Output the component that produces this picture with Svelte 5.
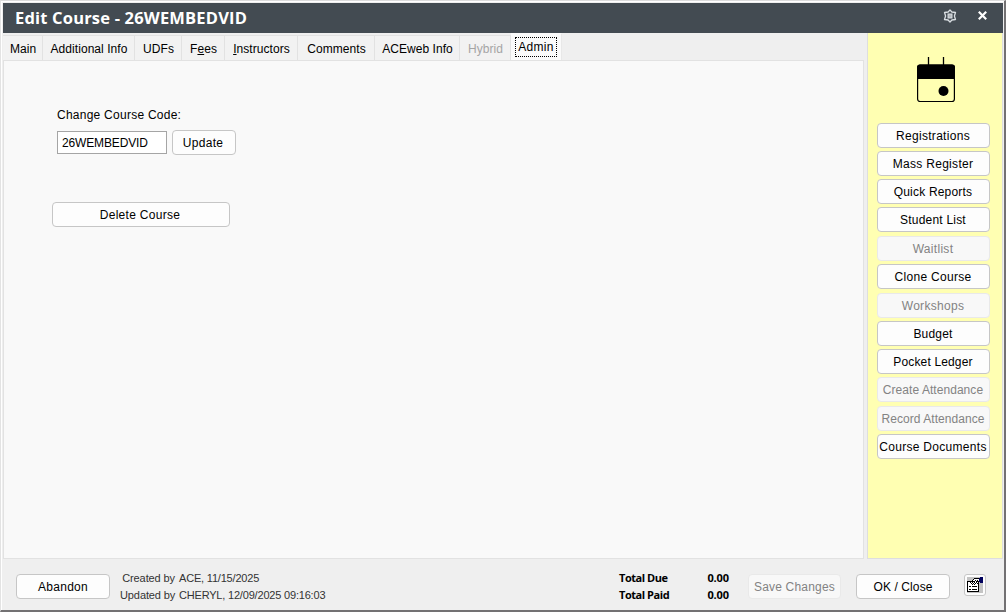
<script lang="ts">
	interface Tab {
		label: string;
		width: number;
		key?: number;
		disabled?: boolean;
	}

	interface Action {
		label: string;
		gap: number;
		spacing: number;
		disabled?: boolean;
	}

	const tabs: Tab[] = [
		{ label: 'Main', width: 40 },
		{ label: 'Additional Info', width: 92 },
		{ label: 'UDFs', width: 47 },
		{ label: 'Fees', width: 43, key: 1 },
		{ label: 'Instructors', width: 73, key: 0 },
		{ label: 'Comments', width: 77 },
		{ label: 'ACEweb Info', width: 85 },
		{ label: 'Hybrid', width: 51, disabled: true },
		{ label: 'Admin', width: 51 }
	];

	const actions: Action[] = [
		{ label: 'Registrations', gap: 0, spacing: 0.3 },
		{ label: 'Mass Register', gap: 3, spacing: 0.3 },
		{ label: 'Quick Reports', gap: 3, spacing: 0.2 },
		{ label: 'Student List', gap: 3, spacing: 0.2 },
		{ label: 'Waitlist', gap: 4, spacing: 0.3, disabled: true },
		{ label: 'Clone Course', gap: 3, spacing: 0.3 },
		{ label: 'Workshops', gap: 4, spacing: 0.3, disabled: true },
		{ label: 'Budget', gap: 3, spacing: 0.2 },
		{ label: 'Pocket Ledger', gap: 3, spacing: 0.15 },
		{ label: 'Create Attendance', gap: 3, spacing: 0.05, disabled: true },
		{ label: 'Record Attendance', gap: 4, spacing: 0.05, disabled: true },
		{ label: 'Course Documents', gap: 3, spacing: 0.3 }
	];

	let active = $state('Admin');
	let code = $state('26WEMBEDVID');
</script>

<div class="window">
	<header class="titlebar">
		<h1>Edit Course - {code}</h1>
		<svg class="gear" width="14" height="14" viewBox="0 0 14 14" fill="none" stroke="#d9dee2">
			<path d="M7 1 8.900 3 12.500 3.500 11.400 7 12.500 10.500 8.900 11 7 13 5.100 11 1.500 10.500 2.600 7 1.500 3.500 5.100 3Z" stroke-width="1.300" stroke-linejoin="round" />
			<rect x="5" y="5" width="4" height="4" fill="#b5babe" stroke-width="1" />
		</svg>
		<svg class="close" width="9" height="9" viewBox="0 0 9 9" stroke="#fff" stroke-width="2.2">
			<path d="M.8.8l7.400 7.400M8.200.8L.8 8.200" />
		</svg>
	</header>

	<div class="middle">
		<main>
			<nav class="tabs">
				{#each tabs as tab}
					<button
						class="tab"
						class:active={active === tab.label}
						disabled={tab.disabled}
						style:width="{tab.width}px"
						onclick={() => { active = tab.label; }}
					>
						<span>{#if tab.key !== undefined}{tab.label.slice(0, tab.key)}<u>{tab.label[tab.key]}</u>{tab.label.slice(tab.key + 1)}{:else}{tab.label}{/if}</span>
					</button>
				{/each}
			</nav>
			<section class="panel">
				<label for="code">Change Course Code:</label>
				<div class="code-row">
					<input id="code" value={code} />
					<button class="btn update">Update</button>
				</div>
				<button class="btn delete">Delete Course</button>
			</section>
		</main>

		<aside>
			<svg class="calendar" width="38" height="46" viewBox="0 0 38 46">
				<path d="M11.500 0v9M26.500 0v9" stroke="#000" stroke-width="1.300" />
				<rect x=".6" y="8" width="36.800" height="36.500" rx="2.500" fill="none" stroke="#000" stroke-width="1.200" />
				<path d="M0 22V10.500Q0 7.500 3 7.500H35Q38 7.500 38 10.500V22Z" />
				<circle cx="26.500" cy="34" r="5" />
			</svg>
			{#each actions as action}
				<button
					class="btn action"
					disabled={action.disabled}
					style:margin-top="{action.gap}px"
					style:letter-spacing="{action.spacing}px"
				>{action.label}</button>
			{/each}
		</aside>
	</div>

	<footer>
		<button class="btn abandon">Abandon</button>
		<dl class="audit">
			<dt>Created by</dt><dd>ACE, 11/15/2025</dd>
			<dt>Updated by</dt><dd>CHERYL, 12/09/2025 09:16:03</dd>
		</dl>
		<dl class="totals">
			<dt>Total Due</dt><dd>0.00</dd>
			<dt>Total Paid</dt><dd>0.00</dd>
		</dl>
		<button class="btn save" disabled>Save Changes</button>
		<button class="btn ok">OK / Close</button>
		<button class="btn props" aria-label="Properties">
			<svg width="16" height="16" viewBox="0 0 16 16" shape-rendering="crispEdges">
				<rect width="16" height="16" fill="#c4c4c4" />
				<path d="M0 4h12v11H0z" />
				<path d="M1 5h10v9H1z" fill="#fff" />
				<path d="M2 9h2v1H2zM5 9h5v1H5zM2 12h2v1H2zM5 12h5v1H5z" />
				<path d="M3 5h1v1H3zM4 4h1v1H4zM5 3h1v1H5zM6 2h1v1H6zM7 1h5v1H7zM5 5h1v1H5zM7 5h1v1H7zM6 6h1v1H6zM8 6h1v1H8zM4 6h1v1H4zM5 7h1v1H5zM7 7h1v1H7zM9 5h1v1H9zM10 6h2v1h-2z" />
				<path d="M7 2h5v2H7zM6 3h1v1H6zM8 4h1v1H8z" fill="#fff" />
				<path d="M8 3h1v1H8zM10 3h1v1h-1zM9 4h1v1H9z" />
				<path d="M12 1h1V0h3v6h-3V5h-1z" fill="#00005c" />
			</svg>
		</button>
	</footer>
</div>

<style>
	:global(body) {
		margin: 0;
		overflow: hidden;
	}

	.window {
		box-sizing: border-box;
		width: 1006px;
		height: 612px;
		display: flex;
		flex-direction: column;
		padding: 1px 1px 0;
		background: #efefef;
		border: solid;
		border-width: 1px 2px 2px 1px;
		border-color: #dcdcdc #737173 #737173 #e3e3e3;
		box-shadow: inset 1px 1px #fff;
		font-family: "Liberation Sans", Arial, sans-serif;
		font-size: 12px;
		color: #000;
	}

	button, input {
		box-sizing: border-box;
		font: inherit;
		color: inherit;
		padding: 0;
		margin: 0;
	}

	.titlebar {
		display: flex;
		align-items: center;
		height: 30px;
		margin: 1px 0 0 1px;
		padding-right: 16px;
		background: #434b52;
		color: #fff;
	}
	h1 {
		flex: 1;
		margin: 0 0 0 12px;
		font: bold 16.5px/30px "Open Sans", "Noto Sans", sans-serif;
		letter-spacing: 0.18px;
	}
	.gear { margin: -5px 21px 0 0; }
	.close { margin-top: -5px; }

	.middle {
		display: flex;
		height: 526px;
		padding-left: 1px;
	}
	main {
		width: 861px;
		display: flex;
		flex-direction: column;
		margin-right: 3px;
	}

	.tabs {
		display: flex;
		height: 28px;
		padding-top: 2px;
		box-sizing: border-box;
	}
	.tab {
		height: 26px;
		padding: 1px 0 0 1px;
		border: solid #e2e2e2;
		border-width: 1px 1px 1px 0;
		background: #f2f2f2;
		letter-spacing: 0.06px;
		white-space: nowrap;
	}
	.tab:disabled { color: #a5a5a5; }
	.tab.active {
		height: 28px;
		margin-top: -2px;
		padding: 0;
		background: #fafafa;
		border-color: #fafafa #e8e8e8 #fafafa #fafafa;
	}
	.tab.active span {
		display: inline-block;
		height: 18px;
		line-height: 18px;
		padding: 0 2px;
		letter-spacing: 0.3px;
		border: 1px dotted #000;
	}
	u { text-underline-offset: 1px; }

	.panel {
		box-sizing: border-box;
		flex: 1;
		display: flex;
		flex-direction: column;
		align-items: flex-start;
		margin-top: -1px;
		padding: 47px 0 0 48px;
		background: #f9f9f9;
		border: 1px solid #e2e2e2;
	}
	label {
		margin-left: 5px;
		line-height: 14px;
		letter-spacing: 0.25px;
	}
	.code-row {
		display: flex;
		margin: 8px 0 0 5px;
		align-items: center;
	}
	input {
		width: 110px;
		height: 23px;
		padding: 0 4px;
		border: 1px solid #a5a5a5;
		border-radius: 0;
		background: #fff;
		letter-spacing: -0.15px;
	}

	.btn {
		height: 25px;
		flex-shrink: 0;
		display: flex;
		align-items: center;
		justify-content: center;
		padding-right: 2px;
		border: 1px solid #c6c6c6;
		border-radius: 4px;
		background: #fdfdfd;
		letter-spacing: 0.3px;
		white-space: nowrap;
	}
	.btn:disabled {
		color: #838383;
		background: #f8f8f8;
		border-color: #e9e9e9;
	}
	.update { width: 64px; margin-left: 5px; }
	.delete { width: 178px; margin-top: 47px; }

	aside {
		box-sizing: border-box;
		width: 136px;
		display: flex;
		flex-direction: column;
		align-items: flex-start;
		padding: 24px 0 0 9px;
		background: #ffffb2;
		border: solid #dedede;
		border-width: 0 1px 1px 1px;
	}
	.calendar {
		margin: 0 0 20px 40px;
	}
	.action {
		width: 113px;
		padding-right: 1px;
	}

	footer {
		flex: 1;
		display: flex;
		align-items: center;
		padding: 4px 17px 0 14px;
	}
	footer .btn { padding: 0; }
	.abandon { width: 94px; }
	dl {
		display: grid;
		margin: 0;
		line-height: 17px;
		font-size: 11px;
		white-space: nowrap;
	}
	dd { margin: 0; }
	.audit {
		grid-template-columns: 55px auto;
		column-gap: 4px;
		margin-left: 10px;
		color: #333;
		letter-spacing: -0.19px;
	}
	.audit dt {
		text-align: right;
		letter-spacing: -0.1px;
	}
	.totals {
		grid-template-columns: 60px 50px;
		margin: -1px 0 0 auto;
		font: bold 11px/17px "Open Sans", "Noto Sans", sans-serif;
		letter-spacing: -0.45px;
	}
	.totals dd {
		text-align: right;
		letter-spacing: -0.1px;
	}
	.save {
		width: 93px;
		margin-left: 19px;
		letter-spacing: 0.2px;
	}
	.ok {
		width: 94px;
		margin-left: 15px;
		letter-spacing: 0.1px;
	}
	.props {
		width: 22px;
		height: 22px;
		margin: -3px 0 0 14px;
		border-radius: 3px;
	}
</style>
